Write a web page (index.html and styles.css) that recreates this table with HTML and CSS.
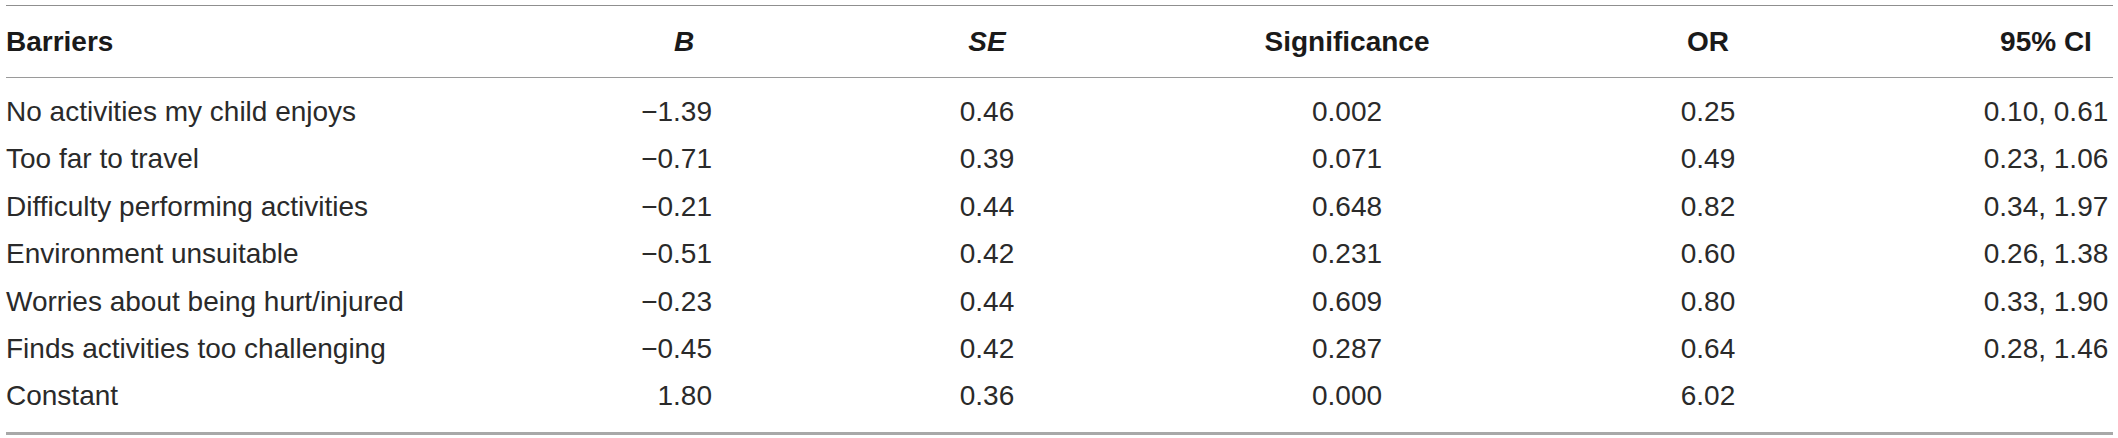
FILE: index.html
```html
<!DOCTYPE html>
<html lang="en">
<head>
<meta charset="utf-8">
<title>Barriers regression table</title>
<link rel="stylesheet" href="styles.css">
</head>
<body>
<table class="results">
  <colgroup>
    <col class="c-label">
    <col class="c-b">
    <col class="c-se">
    <col class="c-sig">
    <col class="c-or">
    <col class="c-ci">
  </colgroup>
  <thead>
    <tr>
      <th class="label">Barriers</th>
      <th class="b-head"><i>B</i></th>
      <th><i>SE</i></th>
      <th>Significance</th>
      <th>OR</th>
      <th>95% CI</th>
    </tr>
  </thead>
  <tbody>
    <tr><td class="label">No activities my child enjoys</td><td class="b-val">−1.39</td><td>0.46</td><td>0.002</td><td>0.25</td><td>0.10, 0.61</td></tr>
    <tr><td class="label">Too far to travel</td><td class="b-val">−0.71</td><td>0.39</td><td>0.071</td><td>0.49</td><td>0.23, 1.06</td></tr>
    <tr><td class="label">Difficulty performing activities</td><td class="b-val">−0.21</td><td>0.44</td><td>0.648</td><td>0.82</td><td>0.34, 1.97</td></tr>
    <tr><td class="label">Environment unsuitable</td><td class="b-val">−0.51</td><td>0.42</td><td>0.231</td><td>0.60</td><td>0.26, 1.38</td></tr>
    <tr><td class="label">Worries about being hurt/injured</td><td class="b-val">−0.23</td><td>0.44</td><td>0.609</td><td>0.80</td><td>0.33, 1.90</td></tr>
    <tr><td class="label">Finds activities too challenging</td><td class="b-val">−0.45</td><td>0.42</td><td>0.287</td><td>0.64</td><td>0.28, 1.46</td></tr>
    <tr><td class="label">Constant</td><td class="b-val">1.80</td><td>0.36</td><td>0.000</td><td>6.02</td><td></td></tr>
  </tbody>
</table>
</body>
</html>
```
FILE: styles.css
```css
html, body {
  margin: 0;
  background: #ffffff;
}
body {
  padding: 5px 5px 0 6px;
  font-family: "Liberation Sans", Arial, Helvetica, sans-serif;
  color: #2a2a2a;
}
.results {
  width: 2107px;
  table-layout: fixed;
  border-collapse: collapse;
  border-top: 1px solid #8f8f8f;
  border-bottom: 3px solid #a8a8a8;
  font-size: 28px;
}
.c-label { width: 629px; }
.c-b { width: 82px; }
.c-se { width: 540px; }
.c-sig { width: 180px; }
.c-or { width: 542px; }
.c-ci { width: 134px; }

.results th {
  font-weight: bold;
  text-align: center;
  padding: 20px 0 19px;
  line-height: 32px;
  white-space: nowrap;
  color: #1a1a1a;
}
.results thead tr {
  border-bottom: 1px solid #9a9a9a;
}
.results td {
  text-align: center;
  padding: 0;
  line-height: 47.4px;
  white-space: nowrap;
}
.results tbody tr:first-child td {
  padding-top: 10px;
}
.results tbody tr:last-child td {
  padding-bottom: 12px;
}
.results .label {
  text-align: left;
}
.results .b-head {
  padding-left: 16px;
}
.results .b-val {
  text-align: right;
  padding-right: 5px;
}
.results i {
  font-style: italic;
}
```
